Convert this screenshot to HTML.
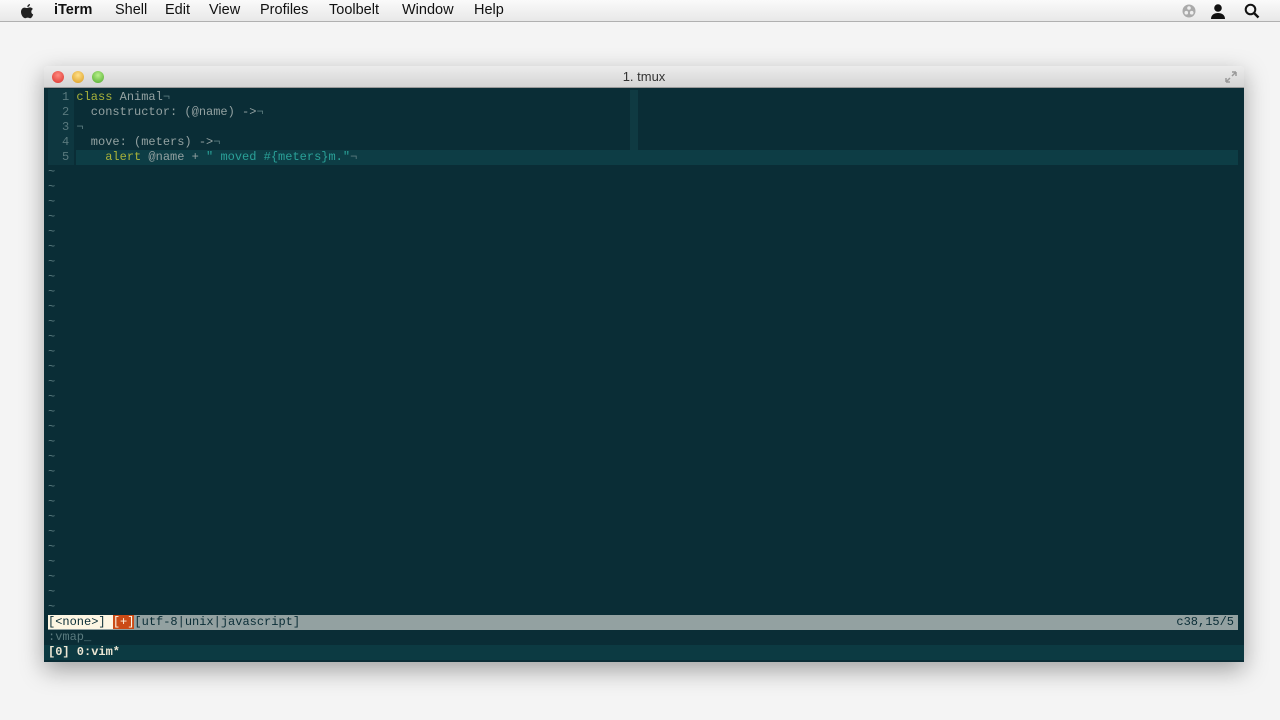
<!DOCTYPE html>
<html><head><meta charset="utf-8"><style>
*{margin:0;padding:0;box-sizing:border-box}
body{width:1280px;height:720px;background:#f4f4f4;position:relative;overflow:hidden;font-family:"Liberation Sans",sans-serif}
.menubar{position:absolute;left:0;top:0;width:1280px;height:22px;background:linear-gradient(#fafafa,#e8e8e8);border-bottom:1px solid #b0b0b0;font-size:14.5px;color:#111}
.menubar span{position:absolute;top:2px}
.win{position:absolute;left:44px;top:66px;width:1200px;height:596px;box-shadow:0 8px 24px rgba(0,0,0,.35);border-radius:4px 4px 0 0;overflow:hidden}
.title{height:22px;background:linear-gradient(#ececec,#d4d4d4);border-bottom:1px solid #999;text-align:center;font-size:13px;color:#333;line-height:22px;position:relative}
.dot{position:absolute;top:5px;width:12px;height:12px;border-radius:50%}
.term{position:absolute;left:0;top:22px;width:1200px;height:574px;background:#0a2d36;font-family:"Liberation Mono",monospace;font-size:12px;color:#93a1a1}
.ln{position:absolute;left:4px;width:26px;height:76px;top:1px;background:#0e3740}
.row{position:absolute;left:0;height:15px;line-height:15px;white-space:pre}
.t{color:#5a7a7e}
</style></head><body>
<div class="menubar">
<svg style="position:absolute;left:19px;top:3px" width="16" height="16" viewBox="0 0 16 16"><path d="M11 1c0 1.5-1.2 3-2.7 3C8.2 2.5 9.5 1.1 11 1zM8 5c1 0 1.8-.6 3-.6 1.2 0 2.3.7 2.9 1.6-2.3 1.3-2 4.6.3 5.5-.5 1.6-1.8 3.7-3 3.7-1 0-1.3-.6-2.5-.6s-1.6.6-2.6.6C4.3 15.2 2 12 2 9c0-2.8 1.8-4.4 3.5-4.4C6.6 4.6 7.2 5 8 5z" fill="#222"/></svg>
<span style="left:54px;font-weight:bold">iTerm</span><span style="left:115px">Shell</span><span style="left:165px">Edit</span><span style="left:209px">View</span><span style="left:260px">Profiles</span><span style="left:329px">Toolbelt</span><span style="left:402px">Window</span><span style="left:474px">Help</span>
<svg style="position:absolute;left:1182px;top:4px" width="14" height="14"><circle cx="7" cy="7" r="6.5" fill="#aaa"/><circle cx="7" cy="4" r="1.8" fill="#eee"/><circle cx="4.3" cy="8.7" r="1.8" fill="#eee"/><circle cx="9.7" cy="8.7" r="1.8" fill="#eee"/></svg>
<svg style="position:absolute;left:1210px;top:3px" width="16" height="16"><circle cx="8" cy="5" r="3.8" fill="#111"/><path d="M1 16c0-4 3-6 7-6s7 2 7 6z" fill="#111"/></svg>
<svg style="position:absolute;left:1244px;top:3px" width="16" height="16"><circle cx="6.5" cy="6.5" r="4.8" fill="none" stroke="#111" stroke-width="2"/><path d="M10 10l4.5 4.5" stroke="#111" stroke-width="2.4"/></svg>
</div>
<div class="win">
<div class="title">1. tmux
<div class="dot" style="left:8px;background:radial-gradient(circle at 50% 35%,#ff8a80,#d9302a)"></div>
<div class="dot" style="left:28px;background:radial-gradient(circle at 50% 35%,#ffe08a,#d99a1c)"></div>
<div class="dot" style="left:48px;background:radial-gradient(circle at 50% 35%,#b8f08a,#4ca82a)"></div>
<svg style="position:absolute;right:6px;top:4px" width="14" height="14"><path d="M2 12l4-4M12 2l-4 4M2 12v-4M2 12h4M12 2v4M12 2h-4" stroke="#999" stroke-width="1.5" fill="none"/></svg>
</div>
<div class="term">
<div class="ln"></div>
<div style="position:absolute;left:586px;top:2px;width:8px;height:60px;background:#0f3a42"></div>
<div style="position:absolute;left:32px;top:62px;width:1162px;height:15px;background:#0d3d45"></div>
<div class="row" style="top:2px;left:18px"><span class="t">1 </span><span style="color:#a8b13a">class</span> Animal<span class="t">¬</span></div>
<div class="row" style="top:17px;left:18px"><span class="t">2 </span>  constructor: (@name) -&gt;<span class="t">¬</span></div>
<div class="row" style="top:32px;left:18px"><span class="t">3 </span><span class="t">¬</span></div>
<div class="row" style="top:47px;left:18px"><span class="t">4 </span>  move: (meters) -&gt;<span class="t">¬</span></div>
<div class="row" style="top:62px;left:18px"><span class="t">5 </span>    <span style="color:#a8b13a">alert</span> @name + <span style="color:#2aa198">" moved #{meters}m."</span><span class="t">¬</span></div>
<div class="row t" style="top:77px;left:4px;line-height:15px">~
~
~
~
~
~
~
~
~
~
~
~
~
~
~
~
~
~
~
~
~
~
~
~
~
~
~
~
~
~</div>
<div class="row" style="top:527px;left:4px;width:1190px;background:#93a1a1;color:#0a2d36"><span style="background:#fdf6e3;color:#0a2d36">[&lt;none&gt;] </span><span style="background:#cb4b16;color:#fdf6e3">[+]</span>[utf-8|unix|javascript]<span style="position:absolute;right:4px">c38,15/5</span></div>
<div class="row t" style="top:542px;left:4px">:vmap_</div>
<div class="row" style="top:557px;left:0;width:1200px;background:#0c3a42;color:#eee8d5;font-weight:bold;padding-left:4px">[0] 0:vim*</div>
</div>
</div>
</body></html>
